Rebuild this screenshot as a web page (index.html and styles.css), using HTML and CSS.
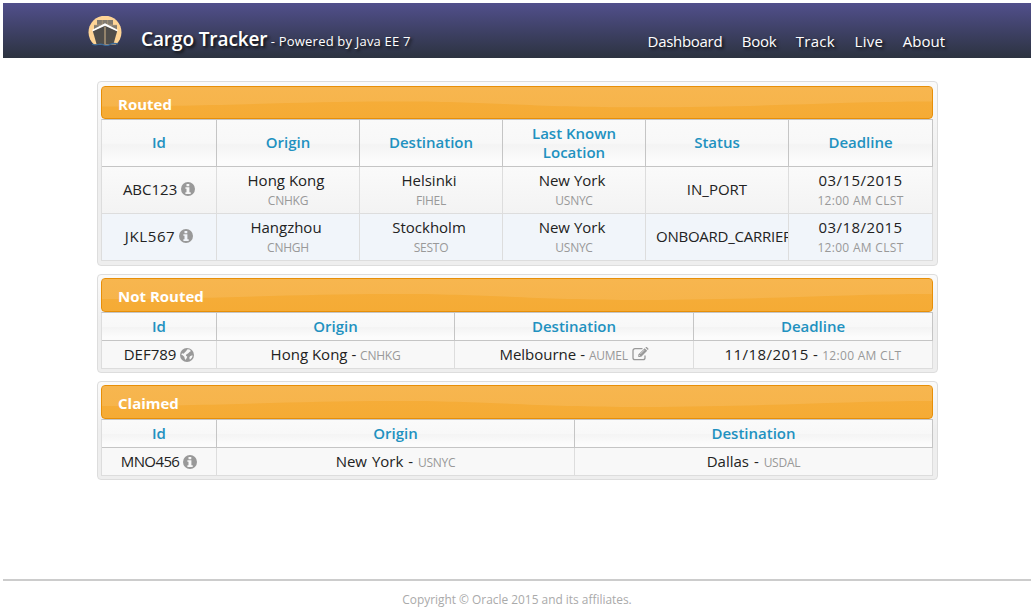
FILE: index.html
```html
<!DOCTYPE html>
<html lang="en">
<head>
<meta charset="utf-8">
<title>Cargo Tracker</title>
<link rel="stylesheet" href="styles.css">
</head>
<body>
<svg class="defs" width="0" height="0">
  <symbol id="wave" viewBox="0 0 830 32" preserveAspectRatio="none">
    <path fill="#fff" fill-opacity=".1" d="M0 0H830V15C740 15 660 21 540 21C430 21 390 15 290 15C190 15 120 20 0 20Z"/>
  </symbol>
  <symbol id="info" viewBox="0 0 14 14">
    <path fill="#999" fill-rule="evenodd" d="M7 0a7 7 0 1 1 0 14A7 7 0 0 1 7 0ZM5.500 2v2.200h2.800V2ZM4.400 5.200v1.500h1.100v3.600H4.400V12h5.300v-1.700H8.400V5.200Z"/>
  </symbol>
  <symbol id="globe" viewBox="0 0 14 14">
    <circle cx="7" cy="7" r="7" fill="#999"/>
    <path fill="#f8f8f8" d="M7.500 1.300 9.500 1.500 11 3 9.500 4 8 5.500 6.500 6.300 5.800 7.500 7.300 8.700 6.600 10.300 5.500 12 4.700 10.500 4.300 8.800 2.300 7 1.300 6.800 2 5.200 3.500 5.800 5 4.200 6.200 3ZM10 8.200l2.300-1 .3.800-.9 2-1.800 1.700-.6-2Z"/>
  </symbol>
  <symbol id="edit" viewBox="0 0 17 14">
    <path fill="none" stroke="#999" stroke-width="1.300" d="M10.500 1.700H3A2 2 0 0 0 1 3.700v7A2 2 0 0 0 3 12.700h8a2 2 0 0 0 2-2V8.500"/>
    <path fill="#999" d="m12.700 1.300 2.500 2.500L9 10H6.300V7.400ZM13.400.6l.6-.5q.4-.3.800 0l1.500 1.500q.4.400 0 .9l-.5.6Z"/>
    <path stroke="#f8f8f8" stroke-width=".6" d="m8.300 7 4-4M7 8l1.400 1.400"/>
  </symbol>
</svg>

<header class="topbar">
  <svg class="logo" viewBox="0 0 34 30">
    <path fill="#ffd596" d="M6 28.500A16.500 16.500 0 1 1 28 28.500Z"/>
    <path fill="#827b70" d="M9 4h16v5h4v6H6V9h3Z"/>
    <path fill="none" stroke="#c4ab84" stroke-width=".5" d="M14.300 4v5M19.700 4v5M6 9h23M11.500 9v4M23 9v4"/>
    <path fill="#4f4d4a" d="M4.800 15 17 9.500 29.200 15 25.500 28H8.500Z"/>
    <path fill="#fff" d="M4.500 13.700 17 7.200l12.500 6.500v1.900L17 9.800 4.500 15.600Z"/>
    <path stroke="#d9bb8d" d="M17 10.500v17.500"/>
    <path fill="none" stroke="#38699a" stroke-width="1.200" d="M4 28q3 1.500 6 .5t6 .5 6-.4 8-.8"/>
  </svg>
  <h1 class="brand"><span class="brand-name">Cargo Tracker</span> <span class="brand-sub">- Powered by Java EE 7</span></h1>
  <nav class="menu"><a class="snug">Dashboard</a><a class="snug">Book</a><a class="loose">Track</a><a class="loose">Live</a><a>About</a></nav>
</header>

<main class="content">
  <section class="panel first">
    <h2 class="bar"><svg class="gloss"><use href="#wave"/></svg><span>Routed</span></h2>
    <table class="grid tall">
      <colgroup><col class="w115"><col class="w143"><col class="w143"><col class="w143"><col class="w143"><col></colgroup>
      <tr><th>Id</th><th>Origin</th><th>Destination</th><th class="two">Last Known Location</th><th>Status</th><th>Deadline</th></tr>
      <tr><td class="one">ABC123 <svg class="ic"><use href="#info"/></svg></td><td><span class="city">Hong Kong</span><small>CNHKG</small></td><td><span class="city">Helsinki</span><small>FIHEL</small></td><td><span class="city">New York</span><small>USNYC</small></td><td class="one">IN_PORT</td><td><span class="date">03/15/2015</span><small class="time">12:00 AM CLST</small></td></tr>
      <tr class="alt"><td class="one"><span class="looser">JKL567</span> <svg class="ic"><use href="#info"/></svg></td><td><span class="city">Hangzhou</span><small>CNHGH</small></td><td><span class="city">Stockholm</span><small>SESTO</small></td><td><span class="city">New York</span><small>USNYC</small></td><td class="one long">ONBOARD_CARRIER</td><td><span class="date">03/18/2015</span><small class="time">12:00 AM CLST</small></td></tr>
    </table>
  </section>

  <section class="panel">
    <h2 class="bar"><svg class="gloss"><use href="#wave"/></svg><span>Not Routed</span></h2>
    <table class="grid">
      <colgroup><col class="w115"><col class="w238"><col class="w239"><col></colgroup>
      <tr><th>Id</th><th>Origin</th><th>Destination</th><th>Deadline</th></tr>
      <tr><td>DEF789 <svg class="ic"><use href="#globe"/></svg></td><td>Hong Kong - <small>CNHKG</small></td><td>Melbourne - <small>AUMEL</small> <svg class="ic wide"><use href="#edit"/></svg></td><td><span class="date">11/18/2015 -</span> <small class="time">12:00 AM CLT</small></td></tr>
    </table>
  </section>

  <section class="panel">
    <h2 class="bar"><svg class="gloss"><use href="#wave"/></svg><span>Claimed</span></h2>
    <table class="grid">
      <colgroup><col class="w115"><col class="w358"><col></colgroup>
      <tr><th>Id</th><th>Origin</th><th>Destination</th></tr>
      <tr><td><span class="tight">MNO456</span> <svg class="ic"><use href="#info"/></svg></td><td class="spaced">New York - <small>USNYC</small></td><td class="spaced">Dallas - <small>USDAL</small></td></tr>
    </table>
  </section>
</main>

<footer class="footer">Copyright © Oracle 2015 and its affiliates.</footer>
</body>
</html>
```
FILE: styles.css
```css
* { box-sizing: border-box; }
body {
  margin: 0;
  padding: 3px;
  height: 615px;
  display: flex;
  flex-direction: column;
  overflow: hidden;
  background: #fff;
  color: #222;
  font: 15px/19px "Trebuchet MS", "Open Sans", sans-serif;
}
.defs { position: absolute; }
.topbar {
  flex: none;
  height: 55px;
  padding: 0 86px 0 85px;
  display: flex;
  align-items: flex-start;
  color: #fff;
  background: linear-gradient(#514f8c, #2c3340);
  text-shadow: 2px 2px 3px #111;
}
.logo { width: 34px; height: 30px; margin-top: 13px; }
.brand { margin: 22px 0 0 19px; font-size: 13px; line-height: 28px; font-weight: 500; white-space: nowrap; }
.brand-name { font-size: 19px; font-weight: 600; letter-spacing: -0.1px; }
.brand-sub { letter-spacing: 0.2px; }
.menu { margin: 28px 0 0 auto; display: flex; gap: 19.5px; line-height: 20px; font-weight: 500; }
.snug { letter-spacing: -0.3px; }
.tight { letter-spacing: -0.6px; }
.loose { letter-spacing: 0.3px; }
.looser { letter-spacing: 0.6px; }
.content { flex: none; width: 841px; margin: 23px 0 0 94px; display: flex; flex-direction: column; gap: 8px; }
.panel {
  padding: 3px 4px 3px 3px;
  border: 1px solid #ddd;
  border-radius: 4px;
  background: linear-gradient(#fafafa, #eee 50%);
}
.panel.first { padding-top: 4px; padding-bottom: 4px; }
.bar {
  position: relative;
  height: 34px;
  margin: 0;
  padding: 7px 16px 0;
  border: 1px solid #e78f08;
  border-radius: 4px;
  background: linear-gradient(#f6ae3b, #f5ab35);
  color: #fff;
  font-size: 15px;
  line-height: 20px;
  font-weight: 700;
}
.first .bar { height: 33px; }
.gloss { position: absolute; inset: 0; width: 100%; height: 100%; }
.bar span { position: relative; }
.grid {
  width: 832px;
  table-layout: fixed;
  border-collapse: separate;
  border-spacing: 0;
  border-left: 1px solid #ddd;
  border-top: 1px solid #c5c5c5;
}
.w115 { width: 115px; }
.w143 { width: 143px; }
.w238 { width: 238px; }
.w239 { width: 239px; }
.w358 { width: 358px; }
th, td {
  height: 28px;
  padding: 0 10px;
  text-align: center;
  vertical-align: middle;
  white-space: nowrap;
  overflow: hidden;
}
.tall th, .tall td { height: 47px; }
.tall th, .tall .one { padding-bottom: 2px; }
.tall .two { padding-bottom: 0; }
th {
  border-right: 1px solid #c5c5c5;
  border-bottom: 1px solid #c5c5c5;
  color: #2191c0;
  font-weight: 600;
  white-space: normal;
  background: linear-gradient(#fafafa 0, #f8f8f8 50%, #f4f4f4 54%, #fcfcfc 90%);
}
td {
  border-right: 1px solid #ddd;
  border-bottom: 1px solid #ddd;
  background: #f8f8f8;
}
.tall td { background: linear-gradient(#fafafa, #f3f3f3); }
.tall .alt td { background: #f1f5fa; }
small { color: #999; font-size: 12px; letter-spacing: -0.25px; }
.tall small { display: block; line-height: 20px; padding-top: 1px; margin-bottom: -1px; }
.city { padding-right: 4px; }
.tall td .city, .tall td .date { display: block; line-height: 20px; }
.date { letter-spacing: 0.45px; }
.time { letter-spacing: 0.3px; }
.spaced { word-spacing: 1px; }
.tall .long { text-align: left; letter-spacing: -0.25px; }
.ic { width: 14px; height: 14px; vertical-align: -1.5px; }
.ic.wide { width: 17px; }
.footer {
  margin-top: auto;
  height: 33px;
  padding-top: 9px;
  border-top: 2px solid #ccc;
  color: #aaa;
  font-size: 11.900px;
  line-height: 18px;
  text-align: center;
}
```
